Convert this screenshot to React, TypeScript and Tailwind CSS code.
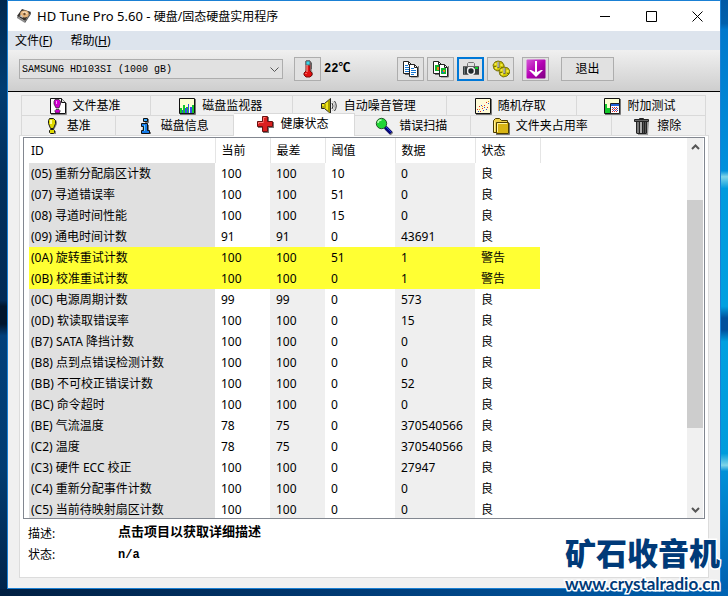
import { useState } from 'react';
import type { ReactNode } from 'react';

type SmartRow = {
  name: string;
  current: number;
  worst: number;
  threshold: number;
  data: number;
  warning?: boolean;
};

type TabItem = {
  label: string;
  icon: ReactNode;
  size: string;
};

const rows: Array<SmartRow> = [
  { name: '(05) 重新分配扇区计数', current: 100, worst: 100, threshold: 10, data: 0 },
  { name: '(07) 寻道错误率', current: 100, worst: 100, threshold: 51, data: 0 },
  { name: '(08) 寻道时间性能', current: 100, worst: 100, threshold: 15, data: 0 },
  { name: '(09) 通电时间计数', current: 91, worst: 91, threshold: 0, data: 43691 },
  { name: '(0A) 旋转重试计数', current: 100, worst: 100, threshold: 51, data: 1, warning: true },
  { name: '(0B) 校准重试计数', current: 100, worst: 100, threshold: 0, data: 1, warning: true },
  { name: '(0C) 电源周期计数', current: 99, worst: 99, threshold: 0, data: 573 },
  { name: '(0D) 软读取错误率', current: 100, worst: 100, threshold: 0, data: 15 },
  { name: '(B7) SATA 降挡计数', current: 100, worst: 100, threshold: 0, data: 0 },
  { name: '(B8) 点到点错误检测计数', current: 100, worst: 100, threshold: 0, data: 0 },
  { name: '(BB) 不可校正错误计数', current: 100, worst: 100, threshold: 0, data: 52 },
  { name: '(BC) 命令超时', current: 100, worst: 100, threshold: 0, data: 0 },
  { name: '(BE) 气流温度', current: 78, worst: 75, threshold: 0, data: 370540566 },
  { name: '(C2) 温度', current: 78, worst: 75, threshold: 0, data: 370540566 },
  { name: '(C3) 硬件 ECC 校正', current: 100, worst: 100, threshold: 0, data: 27947 },
  { name: '(C4) 重新分配事件计数', current: 100, worst: 100, threshold: 0, data: 0 },
  { name: '(C5) 当前待映射扇区计数', current: 100, worst: 100, threshold: 0, data: 0 },
];

const Icon: React.FC<{ children: ReactNode }> = ({ children }) => (
  <svg
    className="h-[18px] w-[18px] shrink-0"
    viewBox="0 0 18 18"
    aria-hidden="true"
  >
    {children}
  </svg>
);

const DriveIcon = () => (
  <Icon>
    <path d="M1 9 6 2l9 3-6 9z" fill="#35302c" />
    <path d="m1 9 8 5v2l-8-5z" fill="#8b8b8b" />
    <path d="m9 14 6-9v2l-6 9z" fill="#555" />
    <ellipse cx="8.5" cy="7" rx="4.3" ry="3.6" fill="#e6b57c" />
    <path d="M6 5 9 4.500l3 2-3 .8z" fill="#f9e0bd" />
    <circle cx="8.5" cy="7" r="1.2" fill="#6b4a2d" />
    <path d="m3 9 3-1 1 3z" fill="#c9c9c9" />
  </Icon>
);

const ThermometerIcon = () => (
  <svg className="h-[18px] w-[12px]" viewBox="0 0 12 18" aria-hidden="true">
    <path d="M5 2h5v9l1 2v2l-2 2H5l-2-2z" fill="#555" opacity=".5" />
    <path d="M4 1h4v10l2 2v2l-2 2H4l-2-2v-2l2-2z" fill="#e21010" stroke="#7a0f0f" />
    <path d="M4 1h4v4H4z" fill="#38d6e8" stroke="#4a6a70" />
    <path d="M5 5v7M4 13v1" stroke="#ffb0a8" />
    <path d="M9 4h1M9 6h1M9 8h1" stroke="#222" />
  </svg>
);

const CopyIcon: React.FC<{ graphic?: boolean }> = ({ graphic }) => (
  <Icon>
    <path d="M3 14.500h6M16.500 6v11H9" stroke="#777" fill="none" />
    <path d="M1.500 1.500h5l3 3v9h-8z" fill="#fff" stroke="#222" />
    <path d="M6.500 1.500v3h3" fill="none" stroke="#222" />
    {!graphic && <path d="M3 5.500h3M3 7.500h5M3 9.500h5M3 11.500h5" stroke="#1677d2" />}
    {graphic && <path d="M3 5h5v6H3z" fill="#12b52a" />}
    {graphic && <path d="M5 7h2v3H5z" fill="#f08418" />}
    <path d="M7.500 4.500h5l3 3v9h-8z" fill="#fff" stroke="#222" />
    <path d="M12.500 4.500v3h3" fill="none" stroke="#222" />
    {!graphic && <path d="M9 8.500h3M9 10.500h5M9 12.500h5M9 14.500h3" stroke="#1677d2" />}
    {graphic && <path d="M9 8h5v6H9z" fill="#12b52a" />}
    {graphic && <path d="M10 11h2v2h-2z" fill="#1770dd" />}
    {graphic && <path d="M11 10h2v2h-2z" fill="#f08418" />}
  </Icon>
);

const CameraIcon = () => (
  <Icon>
    <path d="M5.500 6V3.500l1-1h5l1 1V6" fill="none" stroke="#777" />
    <path d="M1 6h16v9H1z" fill="#333b3d" />
    <path d="M1 6h16v1H1zM1 14h16v1H1z" fill="#666" />
    <path d="M13 7h3v2h-3z" fill="#10c828" />
    <path d="M6 7h5l2 2v4l-2 2H7l-2-2V9z" fill="#efefef" />
    <circle cx="9" cy="11" r="2.700" fill="#20292b" />
    <path d="M2 7h1v7H2z" fill="#6a7476" />
  </Icon>
);

const GearsIcon = () => (
  <Icon>
    <path d="M1 5 3 2l3-1 4 1 2 3v3l-3 2-4 1-3-2z" fill="#cfc600" stroke="#77710c" />
    <path d="m7 11 2-3 3-1 4 1 2 3-1 3-2 2-4 1-3-2z" fill="#cfc600" stroke="#77710c" />
    <path d="M2.500 4h2M3 8h2M8.500 5h2M8.500 10h2M9 14h2M14.500 11h2" stroke="#fff45c" strokeWidth="1.500" />
    <path d="M2 6.500h2M9 7.500h2M8 12.500h2M15 13.500h2" stroke="#77710c" />
    <path d="M6.500 2v6M12.500 8v6" stroke="#666" strokeWidth="2" />
    <path d="M6 2v5M12 8v5" stroke="#ddd" />
  </Icon>
);

const DownloadIcon = () => (
  <svg className="h-[20px] w-[20px]" viewBox="0 0 20 20" aria-hidden="true">
    <defs>
      <linearGradient id="purple" x1="0" y1="0" x2="1" y2="1">
        <stop offset="0" stopColor="#d658d8" />
        <stop offset=".5" stopColor="#b400b4" />
        <stop offset="1" stopColor="#7d007f" />
      </linearGradient>
    </defs>
    <rect x=".5" y=".5" width="19" height="19" rx="1" fill="url(#purple)" />
    <path d="M9 2h2v11l4-2h2l-7 7-7-7h2l4 2z" fill="#fff" />
  </svg>
);

const FileBenchIcon = () => (
  <Icon>
    <path d="M2 17.500h15.500V6" stroke="#888" fill="none" />
    <path d="M1.500 1.500h11l4 4v11h-15z" fill="#fff" stroke="#111" />
    <path d="M12.500 1.500v4h4" fill="#ddd" stroke="#111" />
    <path d="M6 2.500h4l1.500 2V7L10 11H7L5 7V4.500z" fill="#cf00cf" stroke="#222" strokeWidth=".7" />
    <path d="M7.500 4v3" stroke="#ff9dff" />
    <path d="M7 12.500h3l1 1V15l-1 1H7l-1-1v-1.500z" fill="#cf00cf" stroke="#222" strokeWidth=".7" />
  </Icon>
);

const MonitorIcon = () => (
  <Icon>
    <path d="M2 17.500h15.500V2" stroke="#777" fill="none" />
    <path d="M1.500 1.500h15v15h-15z" fill="#fdffd2" stroke="#111" />
    <path d="M2 11h2v5H2zM5 8h2v8H5zM8 10h2v6H8zM14 8h2v8h-2z" fill="#13c72b" />
    <path d="M4 13h1v3H4zM7 11h2v5H7zM10 7h1v9h-1zM12 10h2v6h-2z" fill="#354be8" />
  </Icon>
);

const SpeakerIcon = () => (
  <Icon>
    <path d="M1.500 6.500h3l6-5v15l-6-5h-3z" fill="#f1e718" stroke="#222" />
    <path d="M5 7v4M2 10h2" stroke="#77700a" />
    <path d="m8 4 2-2v14l-2-2z" fill="#a59c00" />
    <path d="M12 6q2 3 0 6M14.500 4q3.500 5 0 10" fill="none" stroke="#333" />
    <path d="M12.500 4q4 5 0 10" fill="none" stroke="#bbb" />
  </Icon>
);

const ScatterIcon = () => (
  <Icon>
    <path d="M2 17.500h15.500V2" stroke="#777" fill="none" />
    <path d="M1.500 1.500h15v15h-15z" fill="#fffbd7" stroke="#111" />
    <path d="M3 12h1v1H3zM5 9h1v1H5zM8 11h1v1H8zM10 8h1v1h-1zM13 10h1v1h-1zM6 14h1v1H6zM12 5h1v1h-1z" fill="#e02323" />
    <path d="M4 14h1v1H4zM7 8h1v1H7zM9 13h1v1H9zM12 12h1v1h-1zM14 6h1v1h-1zM10 10h1v1h-1z" fill="#3550d8" />
    <path d="M5 12h1v1H5zM8 9h1v1H8zM14 4h1v1h-1z" fill="#e89b19" />
  </Icon>
);

const ExtraIcon = () => (
  <Icon>
    <path d="M2 17.500h15.500V2" stroke="#777" fill="none" />
    <path d="M1.500 1.500h15v15h-15z" fill="#fdffd2" stroke="#111" />
    <path d="M2 7h2v9H2zM4 11h3v5H4z" fill="#13c72b" />
    <path d="M7.500 6.500h9v10h-9z" fill="#fff" stroke="#222" />
    <path d="M8 7h8v2H8z" fill="#2463d9" />
    <path d="M9 10.500h6M9 12.500h6M9 14.500h6" stroke="#dc2727" strokeDasharray="1 1" />
    <path d="M10 11.500h5M10 13.500h5" stroke="#3c4bbd" strokeDasharray="1 1" />
  </Icon>
);

const BenchIcon = () => (
  <Icon>
    <path d="M7 3h6l1 2v2l-3 6H9zM8 14h5v3H8z" fill="#888" />
    <path d="M6.500 1.500h4l2 2v3l-2 5h-3l-2-5v-3z" fill="#ded800" stroke="#1a1a1a" />
    <path d="M8 3v4" stroke="#fffd9b" strokeWidth="2" />
    <path d="M7.500 12.500h3l1 1v2l-1 1h-3l-1-1v-2z" fill="#ded800" stroke="#1a1a1a" />
  </Icon>
);

const InfoIcon = () => (
  <Icon>
    <path d="M8 2h4v4H8zM6 8h6v7h2v2H5z" fill="#777" />
    <path d="M6.500 1.500h4v3h-4z" fill="#37aaff" stroke="#111" />
    <path d="M4.500 6.500h6v7h2v3h-8v-3h2v-4h-2z" fill="#167be8" stroke="#111" />
    <path d="M7.500 8v6" stroke="#67d1ff" />
  </Icon>
);

const HealthIcon = () => (
  <Icon>
    <path d="M7 2h6v5h5v6h-5v5H7v-5H2V7h5z" fill="#777" />
    <path d="M6.500 1.500h5v5h5v5h-5v5h-5v-5h-5v-5h5z" fill="#db2020" stroke="#681010" />
    <path d="M7.500 6.500v-4h2M2.500 9V7.500h5" fill="none" stroke="#ff7b73" />
  </Icon>
);

const MagnifierIcon = () => (
  <Icon>
    <path d="m11 11 6 6" stroke="#777" strokeWidth="4" />
    <path d="m10 10 6 6" stroke="#050578" strokeWidth="3.500" />
    <path d="m11 10 5 5" stroke="#2540df" />
    <circle cx="6.500" cy="6.500" r="5.200" fill="#20d536" stroke="#26552b" />
    <path d="M3 6q0-3 3.500-3" fill="none" stroke="#baffb6" strokeWidth="1.500" />
  </Icon>
);

const FolderIcon = () => (
  <Icon>
    <path d="M4 17.500h13.500V6" fill="none" stroke="#777" />
    <path d="M1.500 15.500v-12l2-2h4l2 2h6v12z" fill="#f1d24a" stroke="#4c3c00" />
    <path d="M4.500 5.500h12v11h-12z" fill="#d8b414" stroke="#4c3c00" />
    <path d="M5.500 15V6.500H15" fill="none" stroke="#fff3a0" />
    <path d="M2.500 4.500v10" stroke="#fff3a0" />
  </Icon>
);

const TrashIcon = () => (
  <Icon>
    <path d="M5 5h11l-1 13H5z" fill="#999" />
    <path d="M6.500 2v-.5h4V2" fill="none" stroke="#222" />
    <path d="M1.500 2.500h14v2h-14z" fill="#666" stroke="#222" />
    <path d="M3 5h11v11l-1 1H4l-1-1z" fill="#222" />
    <path d="M4 5h2v11H4z" fill="#777" />
    <path d="M7 5h2v11H7z" fill="#aaa" />
    <path d="M10 5h1v11h-1zM12 5h1v11h-1z" fill="#555" />
  </Icon>
);

const topTabs: Array<TabItem> = [
  { label: '文件基准', icon: <FileBenchIcon />, size: 'grow-129' },
  { label: '磁盘监视器', icon: <MonitorIcon />, size: 'grow-142' },
  { label: '自动噪音管理', icon: <SpeakerIcon />, size: 'grow-154' },
  { label: '随机存取', icon: <ScatterIcon />, size: 'grow-130' },
  { label: '附加测试', icon: <ExtraIcon />, size: 'grow-129' },
];

const bottomTabs: Array<TabItem> = [
  { label: '基准', icon: <BenchIcon />, size: 'grow-93' },
  { label: '磁盘信息', icon: <InfoIcon />, size: 'grow-118' },
  { label: '健康状态', icon: <HealthIcon />, size: 'grow-122' },
  { label: '错误扫描', icon: <MagnifierIcon />, size: 'grow-116' },
  { label: '文件夹占用率', icon: <FolderIcon />, size: 'grow-142' },
  { label: '擦除', icon: <TrashIcon />, size: 'grow-93' },
];

const ToolButton: React.FC<{
  label: string;
  focused?: boolean;
  children: ReactNode;
}> = ({ label, focused, children }) => (
  <button
    aria-label={label}
    className={`flex h-6 w-[27px] shrink-0 items-center justify-center bg-[#e1e1e1] ${
      focused ? 'border-2 border-[#0078d7]' : 'border border-[#adadad]'
    }`}
  >
    {children}
  </button>
);

const TitleBar = () => (
  <header className="flex h-[30px] shrink-0 items-center bg-white pl-2">
    <DriveIcon />
    <h1 className="ml-[3px] grow">
      <span className="text-[13px]">HD Tune Pro 5.60 - </span>
      硬盘/固态硬盘实用程序
    </h1>
    <button aria-label="最小化" className="flex h-full w-[46px] items-center justify-center">
      <svg className="h-[11px] w-[11px]" viewBox="0 0 11 11">
        <path d="M0 5.500h10" stroke="#000" />
      </svg>
    </button>
    <button aria-label="最大化" className="flex h-full w-[46px] items-center justify-center">
      <svg className="h-[11px] w-[11px]" viewBox="0 0 11 11">
        <path d="M.5.500h10v10h-10z" fill="none" stroke="#000" />
      </svg>
    </button>
    <button aria-label="关闭" className="flex h-full w-[46px] items-center justify-center">
      <svg className="h-[11px] w-[11px]" viewBox="0 0 11 11">
        <path d="m.5.500 10 10m0-10-10 10" stroke="#000" />
      </svg>
    </button>
  </header>
);

const MenuBar = () => (
  <nav className="flex h-[19px] shrink-0 items-center gap-[18px] bg-[#dde4ed] px-[7px]">
    <button>
      文件(<u>F</u>)
    </button>
    <button>
      帮助(<u>H</u>)
    </button>
  </nav>
);

const Toolbar = () => (
  <div className="flex h-[42px] shrink-0 items-center border-b border-black bg-linear-to-b from-[#f0f0f0] to-[#cecece] pb-[3px] pl-[11px]">
    <div className="relative w-[264px]">
      <select
        aria-label="硬盘"
        className="block h-5 w-full appearance-none border border-[#adadad] bg-[#e1e1e1] pt-px pl-0.5 font-['Liberation_Mono','Noto_Sans_CJK_SC',monospace] text-[10px] leading-4"
      >
        <option>SAMSUNG HD103SI (1000 gB)</option>
      </select>
      <svg
        className="pointer-events-none absolute top-2 right-1 h-[6px] w-[9px]"
        viewBox="0 0 9 6"
      >
        <path d="m.5.500 4 4 4-4" fill="none" stroke="#555" />
      </svg>
    </div>
    <div className="ml-[11px] flex w-[92px] items-center gap-[3px]">
      <ToolButton label="温度">
        <ThermometerIcon />
      </ToolButton>
      <span className="font-['Liberation_Mono','Noto_Sans_CJK_SC',monospace] font-bold">22℃</span>
    </div>
    <div className="ml-[11px] flex gap-[3px]">
      <ToolButton label="复制文本">
        <CopyIcon />
      </ToolButton>
      <ToolButton label="复制图像">
        <CopyIcon graphic />
      </ToolButton>
      <ToolButton label="截图" focused>
        <CameraIcon />
      </ToolButton>
      <ToolButton label="选项">
        <GearsIcon />
      </ToolButton>
    </div>
    <div className="ml-2 flex gap-3">
      <ToolButton label="下载">
        <DownloadIcon />
      </ToolButton>
      <button className="h-6 w-[53px] border border-[#adadad] bg-[#e1e1e1]">退出</button>
    </div>
  </div>
);

const TabRow: React.FC<{
  items: Array<TabItem>;
  active: string;
  onSelect: (label: string) => void;
}> = ({ items, active, onSelect }) => (
  <div role="tablist" className="flex h-5 border-l border-[#d9d9d9]">
    {items.map((item) => {
      const selected = item.label === active;
      return (
        <button
          key={item.label}
          role="tab"
          aria-selected={selected}
          onClick={() => onSelect(item.label)}
          className={`flex basis-0 items-center justify-center gap-[6px] border-t border-r border-[#d9d9d9] pr-[3px] ${item.size} ${
            selected ? 'z-10 -mt-0.5 -mb-px bg-white pb-0.5' : ''
          }`}
        >
          {item.icon}
          <span>{item.label}</span>
        </button>
      );
    })}
  </div>
);

const SmartTable = () => {
  const headCell = 'border-r border-[#e5e5e5] pl-1.5 font-normal';

  return (
    <table className="ml-[5px] w-[511px] table-fixed border-collapse text-left">
      <colgroup>
        <col className="w-[186px]" />
        <col className="w-[55px]" />
        <col className="w-[55px]" />
        <col className="w-[70px]" />
        <col className="w-[80px]" />
        <col className="w-[65px]" />
      </colgroup>
      <thead>
        <tr className="h-[25px]">
          <th className="border-r border-[#e5e5e5] pl-0.5 font-normal">ID</th>
          <th className={headCell}>当前</th>
          <th className={headCell}>最差</th>
          <th className={headCell}>阈值</th>
          <th className={headCell}>数据</th>
          <th className={headCell}>状态</th>
        </tr>
      </thead>
      <tbody>
        {rows.map((row) => {
          const shade = row.warning ? '' : 'bg-[#efefef]';
          return (
            <tr key={row.name} className={`h-[21px] ${row.warning ? 'bg-[#ffff33]' : ''}`}>
              <td className={`pl-0.5 whitespace-nowrap ${row.warning ? '' : 'bg-[#e0e0e0]'}`}>
                {row.name}
              </td>
              <td className="pl-1.5">{row.current}</td>
              <td className={`pl-1.5 ${shade}`}>{row.worst}</td>
              <td className="pl-1.5">{row.threshold}</td>
              <td className={`pl-1.5 ${shade}`}>{row.data}</td>
              <td className="pl-1.5">{row.warning ? '警告' : '良'}</td>
            </tr>
          );
        })}
      </tbody>
    </table>
  );
};

const ScrollBar = () => (
  <div className="mr-px flex w-4 shrink-0 flex-col bg-[#f0f0f0]">
    <button aria-label="向上滚动" className="flex h-[17px] shrink-0 items-center justify-center">
      <svg className="h-[6px] w-[9px]" viewBox="0 0 9 6">
        <path d="m1 5 3.500-3.500L8 5" fill="none" stroke="#555" strokeWidth="2" />
      </svg>
    </button>
    <div className="min-h-0 grow">
      <div className="h-[13%]" />
      <div className="h-[66%] bg-[#cdcdcd]" />
    </div>
    <button aria-label="向下滚动" className="flex h-[17px] shrink-0 items-center justify-center">
      <svg className="h-[6px] w-[9px]" viewBox="0 0 9 6">
        <path d="m1 1 3.500 3.500L8 1" fill="none" stroke="#555" strokeWidth="2" />
      </svg>
    </button>
  </div>
);

const Watermark = () => (
  <div className="absolute right-2 bottom-0 flex flex-col items-end whitespace-nowrap text-[#003a78] [paint-order:stroke_fill] [-webkit-text-stroke:3px_white]">
    <span className="font-['Noto_Sans_CJK_SC',sans-serif] text-[31px] leading-10 font-black">
      矿石收音机
    </span>
    <span className="font-['Lato','Noto_Sans',sans-serif] text-[17px] leading-6 font-bold">
      www.crystalradio.cn
    </span>
  </div>
);

const App = () => {
  const [activeTab, setActiveTab] = useState('健康状态');

  return (
    <div className="relative flex h-screen flex-col overflow-hidden font-['Noto_Sans','Noto_Sans_CJK_SC',sans-serif] text-xs leading-4 text-black">
      <div className="flex min-h-0 grow">
        <div className="w-[7px] shrink-0 bg-[linear-gradient(#00284f,#003c72_15%,#002f5c_30%,#002a55_51%,#00152c_52%,#00152c_55%,#003f7a_57%,#003b70_80%,#00244a)]" />
        <main className="flex min-w-0 grow flex-col border border-[#1a80d4] bg-[#f0f0f0]">
          <TitleBar />
          <MenuBar />
          <Toolbar />
          <div className="flex min-h-0 grow flex-col px-[11px] pt-[3px] pb-[10px]">
            <div className="mr-[3px] ml-0.5">
              <TabRow items={topTabs} active={activeTab} onSelect={setActiveTab} />
              <TabRow items={bottomTabs} active={activeTab} onSelect={setActiveTab} />
            </div>
            <section className="flex min-h-0 grow flex-col border border-[#dcdcdc] bg-white px-[3px] pt-px">
              <div className="flex min-h-0 grow border border-[#828790]">
                <div className="min-w-0 grow overflow-y-auto [scrollbar-width:none]">
                  <SmartTable />
                </div>
                <ScrollBar />
              </div>
              <dl className="grid h-[58px] shrink-0 grid-cols-[90px_1fr] content-start gap-y-[5px] pt-1 pl-[5px]">
                <dt className="pt-[3px]">描述:</dt>
                <dd className="text-[13px] font-bold">点击项目以获取详细描述</dd>
                <dt>状态:</dt>
                <dd className="font-['Liberation_Mono',monospace] font-bold">n/a</dd>
              </dl>
            </section>
          </div>
        </main>
        <div className="w-[7px] shrink-0 bg-[linear-gradient(#0058a4,#0060ac_4%,#0078cc_5%,#0090dc_29%,#7fd4e8_30%,#009ade_32%,#00a0e0_52%,#00509c_54%,#00509c_56%,#00a0e0_58%,#009cdc_77%,#7fd4e8_79%,#0090d8_80%,#0060b0)]" />
      </div>
      <div className="h-[7px] shrink-0 bg-linear-to-r from-[#001f42] via-[#003c78] to-[#0064b4]" />
      <Watermark />
    </div>
  );
};

export default App;
